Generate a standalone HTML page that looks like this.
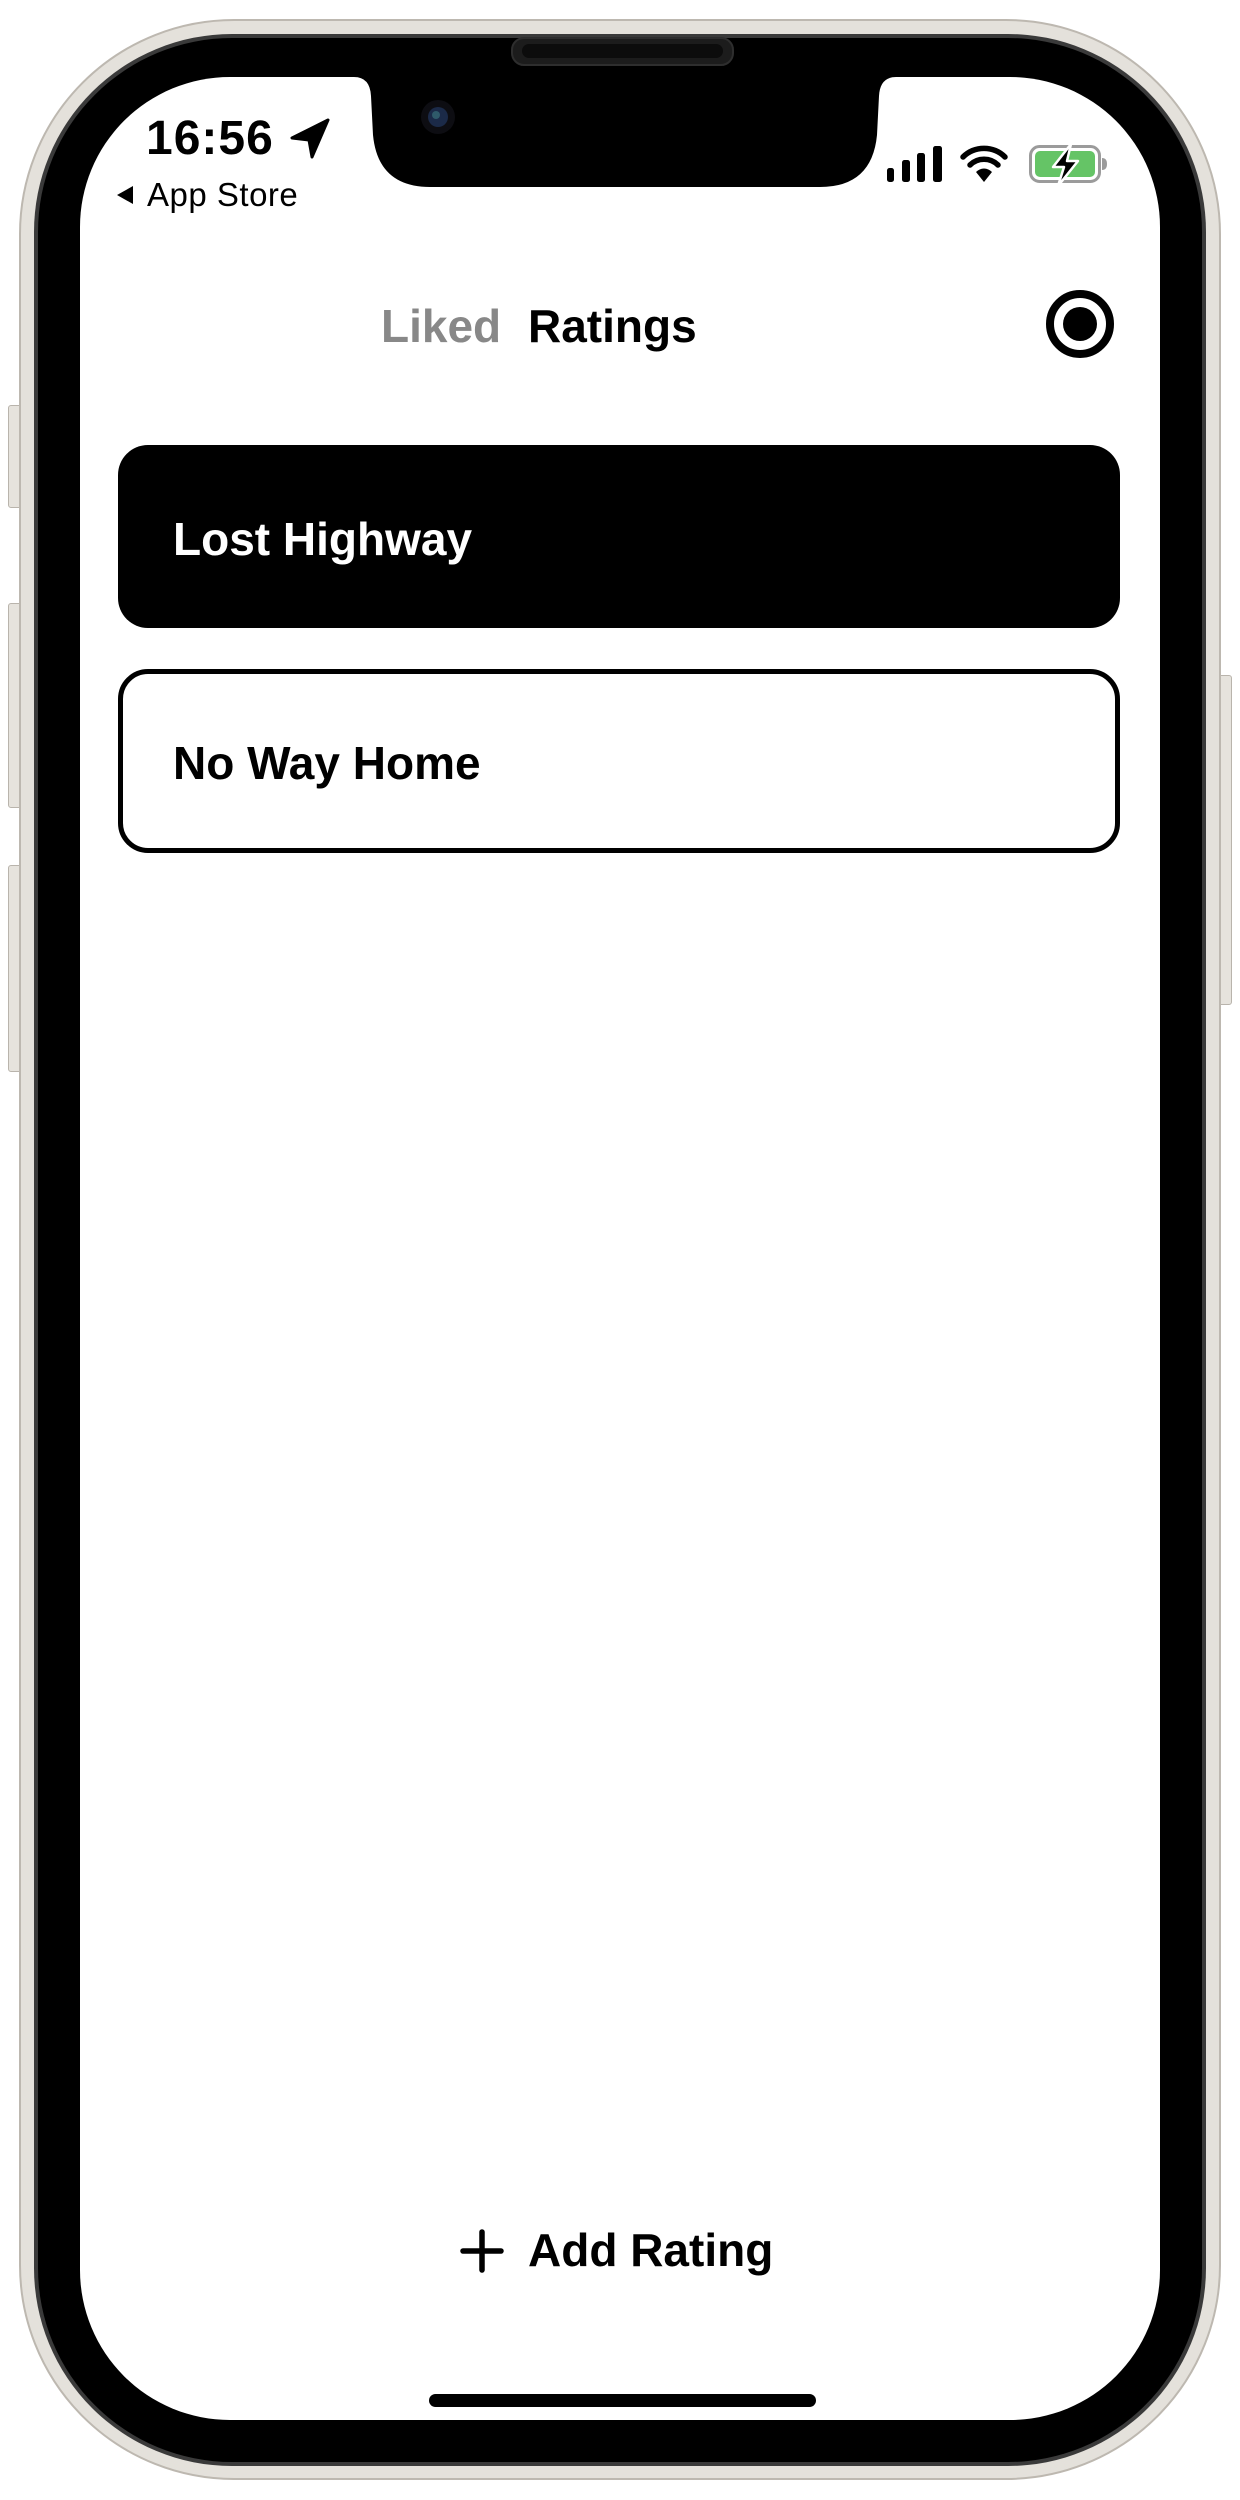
<!DOCTYPE html>
<html><head><meta charset="utf-8"><style>
*{margin:0;padding:0;box-sizing:border-box}
html,body{width:1240px;height:2500px;background:#fff;overflow:hidden;font-family:"Liberation Sans",Arial,sans-serif}
.abs{position:absolute}
.t{position:absolute;white-space:nowrap;line-height:1}
</style></head><body>
<div class="abs" style="left:8px;top:405px;width:16px;height:103px;background:#e6e3dd;border:1px solid #b9b4ac;border-radius:3px"></div>
<div class="abs" style="left:8px;top:603px;width:16px;height:205px;background:#e6e3dd;border:1px solid #b9b4ac;border-radius:3px"></div>
<div class="abs" style="left:8px;top:865px;width:16px;height:207px;background:#e6e3dd;border:1px solid #b9b4ac;border-radius:3px"></div>
<div class="abs" style="left:1216px;top:675px;width:16px;height:330px;background:#e6e3dd;border:1px solid #b9b4ac;border-radius:3px"></div>
<div class="abs" style="left:19px;top:19px;width:1202px;height:2461px;border-radius:215px;background:#e4e1db;border:2px solid #bdb8b0"></div>
<div class="abs" style="left:34px;top:34px;width:1172px;height:2432px;border-radius:198px;background:#3a3a3a"></div>
<div class="abs" style="left:38px;top:38px;width:1164px;height:2424px;border-radius:194px;background:#000"></div>
<div class="abs" style="left:80px;top:77px;width:1080px;height:2343px;border-radius:150px;background:#fff"></div>
<svg class="abs" style="left:0;top:0" width="1240" height="400">
<path d="M354 77 Q370 77 371 96 L373 135 Q378 187 430 187 L820 187 Q872 187 877 135 L879 96 Q880 77 896 77 Z" fill="#000"/>
<rect x="512" y="38" width="221" height="27" rx="12" fill="#1c1c1c" stroke="#2e2e2e" stroke-width="2"/>
<rect x="522" y="44" width="201" height="14" rx="7" fill="#0c0c0c"/>
<circle cx="438" cy="117" r="17" fill="#0d0d12"/>
<circle cx="438" cy="117" r="10" fill="#1b2a48"/>
<circle cx="436" cy="115" r="4" fill="#2f5a6a"/>
<path d="M328 120 L292 138 L309 140 L312 157 Z" fill="#000" stroke="#000" stroke-width="3" stroke-linejoin="round"/>
<path d="M117 195 L133 186 L133 204 Z" fill="#000"/>
<rect x="887" y="168" width="7" height="14" rx="2.5" fill="#000"/>
<rect x="902" y="160" width="8" height="22" rx="2.5" fill="#000"/>
<rect x="917" y="153" width="8" height="29" rx="2.5" fill="#000"/>
<rect x="933" y="146" width="9" height="36" rx="2.5" fill="#000"/>
<g fill="none" stroke="#000" stroke-width="5.5" stroke-linecap="round">
<path d="M963 157 A30 30 0 0 1 1005 157"/>
<path d="M970 165 A20 20 0 0 1 998 165"/>
</g>
<path d="M976 172 A11 11 0 0 1 992 172 L984 182 Z" fill="#000"/>
<rect x="1030.5" y="146.5" width="69" height="35" rx="9" fill="none" stroke="#9b9b9b" stroke-width="3"/>
<rect x="1035" y="151" width="60" height="26" rx="5" fill="#65c466"/>
<path d="M1102 158 Q1107 158 1107 164 Q1107 170 1102 170 Z" fill="#9b9b9b"/>
<path d="M1071 144 L1053 167 L1064 167 L1058 186 L1078 161 L1067 161 Z" fill="#000" stroke="#fff" stroke-width="2.5" stroke-linejoin="round"/>
<circle cx="1080" cy="324" r="30" fill="none" stroke="#000" stroke-width="8"/>
<circle cx="1080" cy="324" r="17" fill="#000"/>
</svg>
<div class="t" style="left:146px;top:115px;font-size:48px;font-weight:600;letter-spacing:1px">16:56</div>
<div class="t" style="left:147px;top:178px;font-size:33px;letter-spacing:0.5px">App Store</div>
<div class="t" style="left:381px;top:303px;font-size:46px;font-weight:700;color:#888">Liked</div>
<div class="t" style="left:528px;top:303px;font-size:46px;font-weight:700;color:#000">Ratings</div>
<div class="abs" style="left:118px;top:445px;width:1002px;height:183px;border-radius:30px;background:#000"></div>
<div class="t" style="left:173px;top:516px;font-size:46px;font-weight:700;color:#fff">Lost Highway</div>
<div class="abs" style="left:118px;top:669px;width:1002px;height:184px;border-radius:30px;border:5px solid #000;background:#fff"></div>
<div class="t" style="left:173px;top:740px;font-size:46px;font-weight:700;color:#000">No Way Home</div>
<svg class="abs" style="left:455px;top:2226px" width="55" height="50"><path d="M27 6 V44 M8 25 H46" stroke="#000" stroke-width="5.5" stroke-linecap="round"/></svg>
<div class="t" style="left:528px;top:2227px;font-size:46px;font-weight:700;color:#000">Add Rating</div>
<div class="abs" style="left:429px;top:2394px;width:387px;height:13px;border-radius:7px;background:#000"></div>
</body></html>
